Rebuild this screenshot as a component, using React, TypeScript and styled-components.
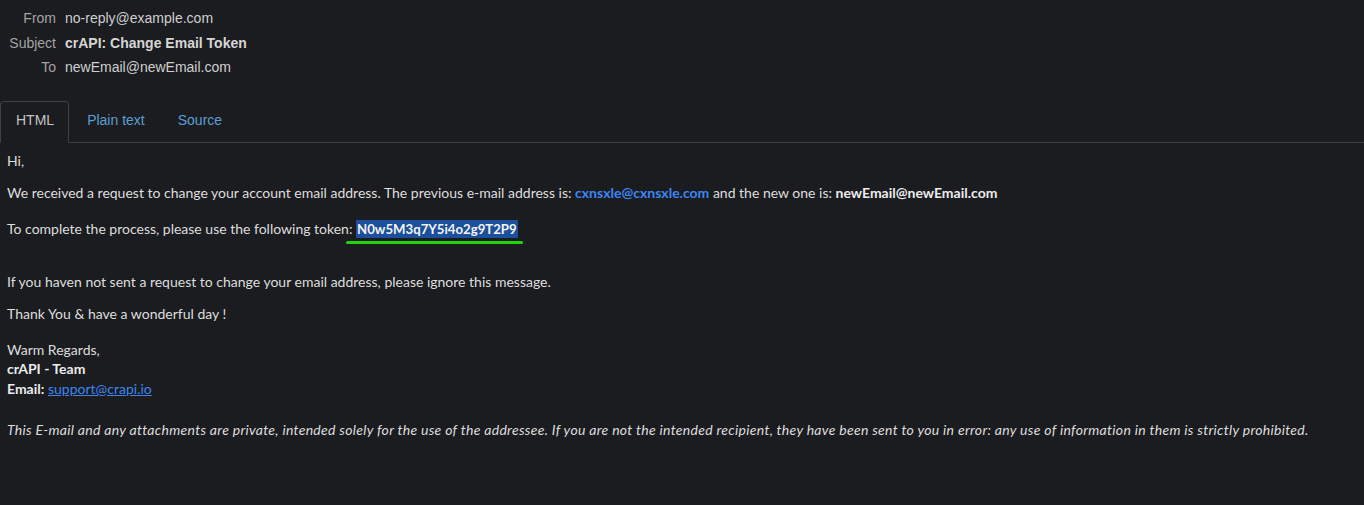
import React from 'react';
import styled, {createGlobalStyle} from "styled-components";

const GlobalStyle = createGlobalStyle`
  html, body {
    margin: 0;
    padding: 0;
    background: #1b1c1f;
  }
`

const headers = [
   {label: "From", value: "no-reply@example.com", bold: false},
   {label: "Subject", value: "crAPI: Change Email Token", bold: true},
   {label: "To", value: "newEmail@newEmail.com", bold: false},
]

const tabs = ["HTML", "Plain text", "Source"]

export default function App() {
   return (
      <Page>
         <GlobalStyle/>
         <HeaderTable>
            {headers.map(h => (
               <HeaderRow key={h.label}>
                  <HeaderLabel>{h.label}</HeaderLabel>
                  <HeaderValue bold={h.bold}>{h.value}</HeaderValue>
               </HeaderRow>
            ))}
         </HeaderTable>

         <Tabs>
            {tabs.map((t, i) => (
               <Tab key={t} active={i === 0}>{t}</Tab>
            ))}
         </Tabs>

         <Body>
            <P>Hi,</P>
            <P>
               We received a request to change your account email address. The previous e-mail address is:{" "}
               <Link>cxnsxle@cxnsxle.com</Link> and the new one is: <b>newEmail@newEmail.com</b>
            </P>
            <TokenLine>
               To complete the process, please use the following token:{" "}
               <TokenWrap>
                  <Token>N0w5M3q7Y5i4o2g9T2P9</Token>
                  <Underline/>
               </TokenWrap>
            </TokenLine>
            <Spacer/>
            <P>If you haven not sent a request to change your email address, please ignore this message.</P>
            <P>Thank You &amp; have a wonderful day !</P>
            <Signature>
               Warm Regards,<br/>
               <b>crAPI - Team</b><br/>
               <b>Email:</b> <MailLink href="#">support@crapi.io</MailLink>
            </Signature>
            <Disclaimer>
               This E-mail and any attachments are private, intended solely for the use of the addressee. If you are not the intended recipient, they have been sent to you in error: any use of information in them is strictly prohibited.
            </Disclaimer>
         </Body>
      </Page>
   );
}

const Page = styled.div`
    min-height: 505px;
    background: #1b1c1f;
    font-family: "Liberation Sans", Arial, sans-serif;
    font-size: 14px;
    padding-top: 8px;
`
const HeaderTable = styled.div`
    display: grid;
    grid-template-columns: 56px 1fr;
    row-gap: 4px;
`
const HeaderRow = styled.div`
    display: contents;
`
const HeaderLabel = styled.span`
    text-align: right;
    color: #a3a3a3;
    line-height: 20.5px;
`
const HeaderValue = styled.span<{ bold: boolean }>`
    padding-left: 9px;
    color: ${p => p.bold ? "#d6d6d6" : "#cfcfcf"};
    font-weight: ${p => p.bold ? 700 : 400};
    line-height: 20.5px;
`
const Tabs = styled.div`
    display: flex;
    margin-top: 23px;
    border-bottom: 1px solid #3f4144;
`
const Tab = styled.div<{ active: boolean }>`
    padding: 8px 14px 12px 15px;
    margin-right: 2px;
    margin-bottom: -1px;
    line-height: 20px;
    border: 1px solid ${p => p.active ? "#3f4144" : "transparent"};
    border-bottom-color: ${p => p.active ? "#1b1c1f" : "transparent"};
    border-radius: 4px 4px 0 0;
    color: ${p => p.active ? "#c4c4c4" : "#5a9fd4"};
`
const Body = styled.div`
    padding: 0 7px;
    font-family: Lato, "Open Sans", sans-serif;
    font-size: 14px;
    line-height: 19.5px;
    color: #dedede;
`
const P = styled.p`
    margin: 13px 0;

    &:first-child {
        margin-top: 8px;
    }

    b {
        font-weight: 700;
        color: #ececec;
    }
`
const TokenLine = styled(P)`
    margin-top: 15px;
`
const Link = styled.span`
    color: #3b86f2;
    font-weight: 700;
`
const TokenWrap = styled.span`
    position: relative;
    display: inline-block;
    line-height: 22px;
`
const Token = styled.span`
    background: #1c4f9c;
    color: #f4f4f4;
    font-size: 13.2px;
    font-weight: 700;
    padding: 1px 1px;
`
const Underline = styled.span`
    position: absolute;
    left: -10px;
    right: -5px;
    bottom: -4px;
    height: 3px;
    border-radius: 2px;
    background: #22d40c;
`
const Spacer = styled.div`
    height: 6px;
`
const Signature = styled.p`
    margin: 16px 0 13px;
    line-height: 19.5px;

    b {
        color: #ececec;
    }
`
const MailLink = styled.a`
    color: #3b86f2;
    text-decoration: underline;
`
const Disclaimer = styled.p`
    margin: 22px 0 0;
    font-style: italic;
    letter-spacing: 0.3px;
`
